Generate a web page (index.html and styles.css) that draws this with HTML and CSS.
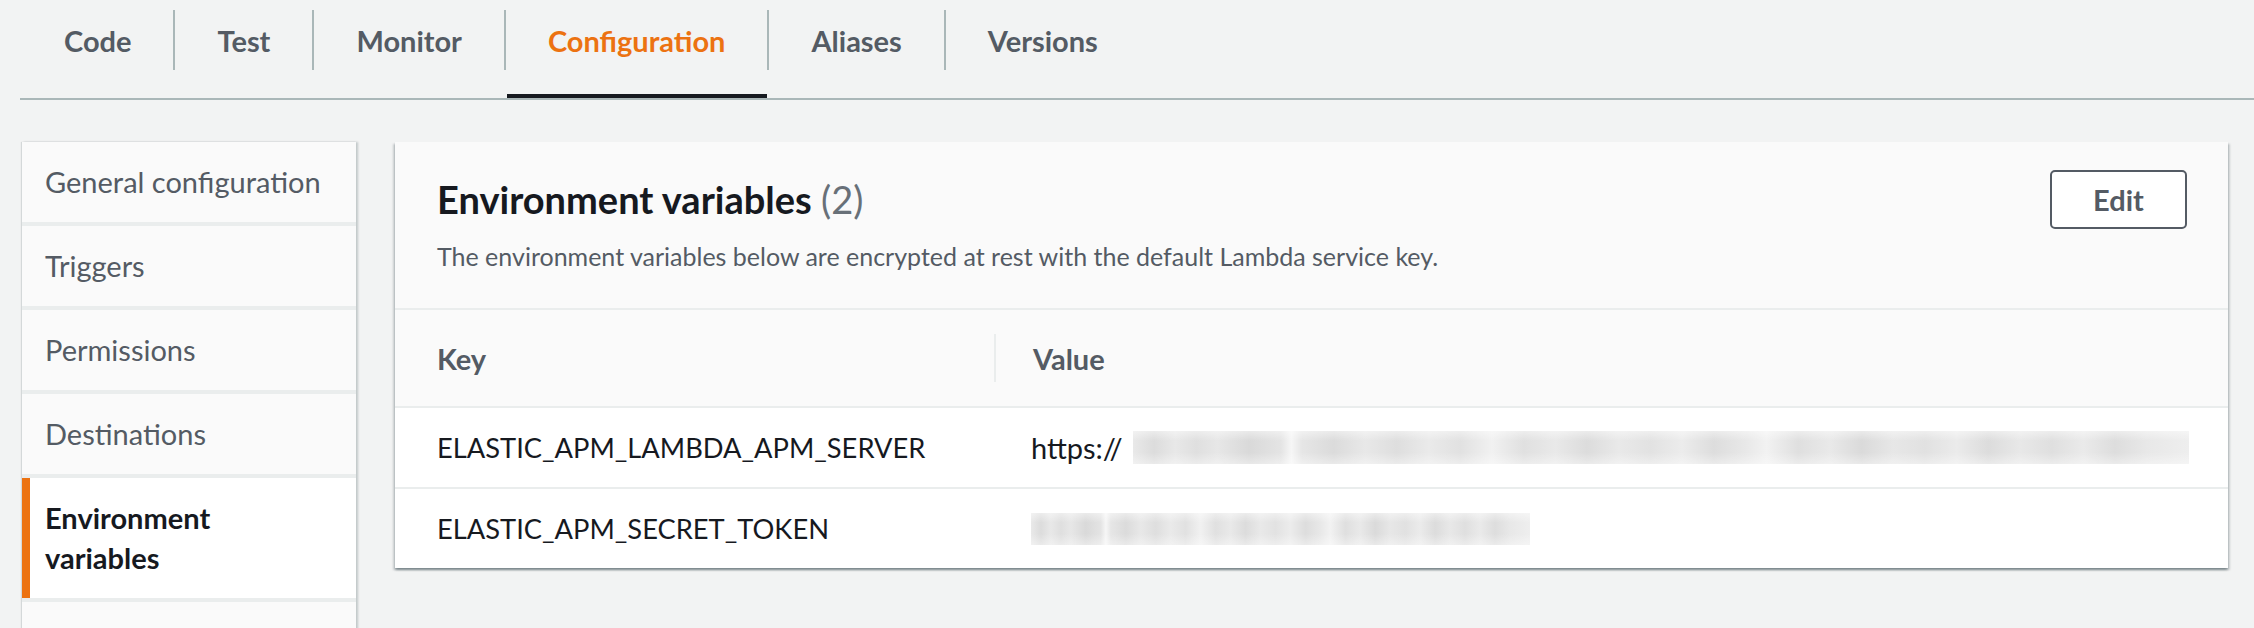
FILE: index.html
```html
<!DOCTYPE html>
<html lang="en">
<head>
<meta charset="utf-8">
<title>Lambda configuration - Environment variables</title>
<link rel="stylesheet" href="styles.css">
</head>
<body>
  <nav class="tabs">
    <div class="tab first"><span class="tab-label">Code</span></div>
    <div class="tab"><span class="tab-label">Test</span></div>
    <div class="tab"><span class="tab-label">Monitor</span></div>
    <div class="tab active"><span class="tab-label">Configuration</span></div>
    <div class="tab"><span class="tab-label">Aliases</span></div>
    <div class="tab"><span class="tab-label">Versions</span></div>
  </nav>

  <div class="content">
    <ul class="side-nav">
      <li class="side-item">General configuration</li>
      <li class="side-item">Triggers</li>
      <li class="side-item">Permissions</li>
      <li class="side-item">Destinations</li>
      <li class="side-item selected">Environment variables</li>
      <li class="side-item side-item-more"></li>
    </ul>

    <section class="panel">
      <header class="panel-header">
        <div class="panel-heading">
          <h2 class="panel-title">Environment variables <span class="count">(2)</span></h2>
          <p class="panel-desc">The environment variables below are encrypted at rest with the default Lambda service key.</p>
        </div>
        <button class="btn">Edit</button>
      </header>

      <div class="table">
        <div class="th th-key">Key</div>
        <div class="th th-value"><span class="col-divider"></span><span>Value</span></div>

        <div class="td td-key">ELASTIC_APM_LAMBDA_APM_SERVER</div>
        <div class="td td-value">https://<span class="redacted redacted-long"></span></div>

        <div class="td td-key">ELASTIC_APM_SECRET_TOKEN</div>
        <div class="td td-value"><span class="redacted redacted-short"></span></div>
      </div>
    </section>
  </div>
</body>
</html>
```

FILE: styles.css
```css
* {
  box-sizing: border-box;
}

html, body {
  margin: 0;
  padding: 0;
  height: 628px;
  overflow: hidden;
}

body {
  background: #f2f3f3;
  font-family: Lato, "Open Sans", "Liberation Sans", sans-serif;
  font-size: 29px;
  color: #16191f;
}

/* ---------- Tabs ---------- */
.tabs {
  display: flex;
  margin-left: 20px;
  border-bottom: 2px solid #aab7b8;
  height: 100px;
}

.tab {
  position: relative;
  padding-top: 10px;
}

.tab-label {
  display: flex;
  align-items: center;
  height: 60px;
  padding: 0 42px;
  border-left: 2px solid #aab7b8;
  font-weight: 700;
  font-size: 29px;
  color: #545b64;
}

.tab.first .tab-label {
  border-left: 0;
  padding-left: 44px;
}

.tab.active .tab-label {
  color: #ec7211;
}

.tab.active::after {
  content: "";
  position: absolute;
  left: 3px;
  right: 0;
  bottom: 0;
  height: 4px;
  background: #16191f;
}

/* ---------- Content ---------- */
.content {
  display: flex;
  align-items: flex-start;
  gap: 39px;
  padding: 42px 26px 0 22px;
}

/* ---------- Side nav ---------- */
.side-nav {
  list-style: none;
  margin: 0;
  padding: 0;
  width: 334px;
  flex: 0 0 334px;
  display: flex;
  flex-direction: column;
  gap: 4px;
  background: #eaeded;
  box-shadow: 2px 0 2px rgba(0, 28, 36, 0.2), -1px 0 1px rgba(0, 28, 36, 0.12);
}

.side-item {
  background: #fafafa;
  padding: 20px 30px 20px 23px;
  line-height: 40px;
  color: #545b64;
}

.side-item-more {
  height: 80px;
}

.side-item.selected {
  background: #ffffff;
  border-left: 8px solid #ec7211;
  padding-left: 15px;
  font-weight: 700;
  color: #16191f;
}

/* ---------- Panel ---------- */
.panel {
  flex: 1;
  background: #ffffff;
  box-shadow: 0 2px 2px rgba(0, 28, 36, 0.3), 2px 2px 2px rgba(0, 28, 36, 0.15), -2px 2px 2px rgba(0, 28, 36, 0.15);
}

.panel-header {
  display: flex;
  justify-content: space-between;
  align-items: flex-start;
  background: #fafafa;
  padding: 28px 41px 36px 42px;
  border-bottom: 2px solid #eaeded;
}

.panel-heading {
  margin-top: 7px;
}

.panel-title {
  margin: 0;
  font-size: 38px;
  line-height: 44px;
  font-weight: 700;
  color: #16191f;
}

.count {
  font-weight: 400;
  color: #687078;
}

.panel-desc {
  margin: 19px 0 0;
  font-size: 25px;
  line-height: 32px;
  color: #545b64;
}

.btn {
  width: 137px;
  height: 59px;
  background: #ffffff;
  border: 2px solid #545b64;
  border-radius: 5px;
  font-family: inherit;
  font-size: 29px;
  font-weight: 700;
  color: #545b64;
  padding: 0;
}

/* ---------- Table ---------- */
.table {
  display: grid;
  grid-template-columns: 599px 1fr;
}

.th {
  display: flex;
  align-items: center;
  height: 98px;
  background: #fafafa;
  border-bottom: 2px solid #eaeded;
  font-weight: 700;
  color: #545b64;
}

.th-key {
  padding-left: 42px;
}

.th-value {
  gap: 37px;
}

.col-divider {
  width: 2px;
  height: 48px;
  background: #eaeded;
}

.td {
  display: flex;
  align-items: center;
  height: 79px;
  font-size: 27.3px;
  color: #16191f;
}

.table .td:nth-child(3),
.table .td:nth-child(4) {
  border-bottom: 2px solid #eaeded;
  height: 81px;
}

.td-key {
  padding-left: 42px;
}

.td-value {
  padding-left: 37px;
  font-size: 29px;
}

.redacted {
  display: inline-block;
  height: 33px;
  background:
    linear-gradient(to bottom, rgba(255,255,255,0.45) 0%, rgba(255,255,255,0) 30%, rgba(255,255,255,0) 65%, rgba(255,255,255,0.4) 100%),
    linear-gradient(to right,
      #e9e9e9 0%, #dcdcdc 2%, #e8e8e8 4%, #dfdfdf 6%, #e7e7e7 8%, #d9d9d9 11%, #e4e4e4 14%,
      #f6f6f6 15%, #e6e6e6 16%, #dbdbdb 19%, #e8e8e8 22%, #dedede 25%, #eaeaea 28%, #e1e1e1 31%,
      #f1f1f1 34%, #e0e0e0 37%, #e9e9e9 40%, #dcdcdc 43%, #e9e9e9 46%, #e2e2e2 49%, #ececec 52%,
      #dddddd 55%, #e8e8e8 58%, #f2f2f2 60%, #dfdfdf 63%, #e9e9e9 66%, #dadada 69%, #e7e7e7 72%,
      #e1e1e1 75%, #ebebeb 78%, #dcdcdc 81%, #e8e8e8 84%, #dfdfdf 87%, #eaeaea 90%, #dddddd 93%,
      #e8e8e8 96%, #eeeeee 100%);
}

.redacted-long {
  width: 1056px;
  margin-left: 10px;
}

.redacted-short {
  width: 499px;
  height: 32px;
}
```
